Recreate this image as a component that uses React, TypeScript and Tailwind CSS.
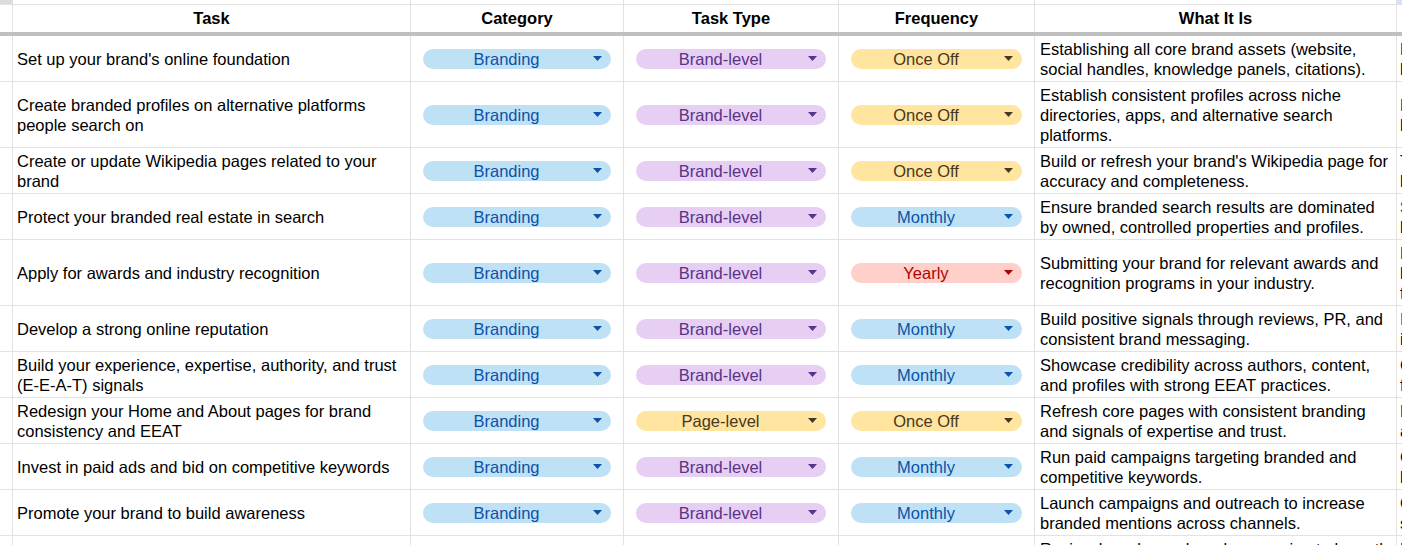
import React from "react";

type Tone = "blue" | "purple" | "yellow" | "red";

const tones: Record<Tone, string> = {
  blue: "bg-[#bfe1f6] text-[#0a53a8]",
  purple: "bg-[#e6cff2] text-[#5a3286]",
  yellow: "bg-[#ffe5a0] text-[#473821]",
  red: "bg-[#ffcfc9] text-[#b10202]",
};

const freqTone: Record<string, Tone> = {
  "Once Off": "yellow",
  Monthly: "blue",
  Yearly: "red",
};

type Row = {
  task: string[];
  type: string;
  freq: string;
  what: string[];
  next: string[];
  tall?: boolean;
};

const rows: Row[] = [
  {
    task: ["Set up your brand's online foundation"],
    type: "Brand-level",
    freq: "Once Off",
    what: ["Establishing all core brand assets (website,", "social handles, knowledge panels, citations)."],
    next: ["Ensures", "brand"],
  },
  {
    task: ["Create branded profiles on alternative platforms", "people search on"],
    type: "Brand-level",
    freq: "Once Off",
    what: ["Establish consistent profiles across niche", "directories, apps, and alternative search", "platforms."],
    next: ["Expands", "brand"],
    tall: true,
  },
  {
    task: ["Create or update Wikipedia pages related to your", "brand"],
    type: "Brand-level",
    freq: "Once Off",
    what: ["Build or refresh your brand's Wikipedia page for", "accuracy and completeness."],
    next: ["Trusted", "knowledge"],
  },
  {
    task: ["Protect your branded real estate in search"],
    type: "Brand-level",
    freq: "Monthly",
    what: ["Ensure branded search results are dominated", "by owned, controlled properties and profiles."],
    next: ["Stops", "brand"],
  },
  {
    task: ["Apply for awards and industry recognition"],
    type: "Brand-level",
    freq: "Yearly",
    what: ["Submitting your brand for relevant awards and", "recognition programs in your industry."],
    next: ["Builds", "brand", "for"],
    tall: true,
  },
  {
    task: ["Develop a strong online reputation"],
    type: "Brand-level",
    freq: "Monthly",
    what: ["Build positive signals through reviews, PR, and", "consistent brand messaging."],
    next: ["Influences", "in"],
  },
  {
    task: ["Build your experience, expertise, authority, and trust", "(E-E-A-T) signals"],
    type: "Brand-level",
    freq: "Monthly",
    what: ["Showcase credibility across authors, content,", "and profiles with strong EEAT practices."],
    next: ["Core", "for"],
  },
  {
    task: ["Redesign your Home and About pages for brand", "consistency and EEAT"],
    type: "Page-level",
    freq: "Once Off",
    what: ["Refresh core pages with consistent branding", "and signals of expertise and trust."],
    next: ["Key", "and"],
  },
  {
    task: ["Invest in paid ads and bid on competitive keywords"],
    type: "Brand-level",
    freq: "Monthly",
    what: ["Run paid campaigns targeting branded and", "competitive keywords."],
    next: ["Captures", "brand"],
  },
  {
    task: ["Promote your brand to build awareness"],
    type: "Brand-level",
    freq: "Monthly",
    what: ["Launch campaigns and outreach to increase", "branded mentions across channels."],
    next: ["Grows", "search"],
  },
  {
    task: ["Review brand consistency across channels"],
    type: "Brand-level",
    freq: "Monthly",
    what: ["Review brand search and messaging to keep them", "consistent across every channel."],
    next: ["Keeps", "brand"],
  },
];

const cols = "grid grid-cols-[13px_398px_213px_215px_196px_362px_1fr]";
const cell = "border-r border-b border-[#e2e2e2]";

function Chip({ label, tone }: { label: string; tone: Tone }) {
  return (
    <div className={`mx-[12px] flex h-[20px] flex-1 items-center rounded-full ${tones[tone]}`}>
      <span className="flex-1 text-center leading-[20px]">{label}</span>
      <svg width="9" height="5" viewBox="0 0 9 5" className="mr-[9px] ml-[3px]">
        <path d="M0 0h9L4.5 5z" fill="currentColor" />
      </svg>
    </div>
  );
}

function Lines({ lines }: { lines: string[] }) {
  return (
    <div className="flex flex-col">
      {lines.map((l, i) => (
        <div key={i} className="whitespace-nowrap">
          {l}
        </div>
      ))}
    </div>
  );
}

export default function App() {
  return (
    <div
      className="h-[545px] w-[1402px] overflow-hidden bg-white text-[16.5px] leading-[20px] text-black"
      style={{ fontFamily: '"Liberation Sans", Arial, sans-serif' }}
    >
      {/* tail of the sheet's column header bar */}
      <div className={`${cols} h-[5px]`}>
        <div className={`${cell} bg-[#dadce0]`} />
        <div className={cell} />
        <div className={cell} />
        <div className={cell} />
        <div className={cell} />
        <div className={cell} />
        <div className="border-b border-[#e2e2e2] bg-[#d3e3fd]" />
      </div>

      {/* header */}
      <div className={`${cols} h-[31px] border-b-[4px] border-[#c0c0c0] font-bold`}>
        <div className="border-r border-[#e2e2e2]" />
        {["Task", "Category", "Task Type", "Frequency", "What It Is"].map((h) => (
          <div key={h} className="flex items-center justify-center border-r border-[#e2e2e2] pb-[1px]">
            {h}
          </div>
        ))}
        <div />
      </div>

      {rows.map((r, i) => (
        <div key={i} className={`${cols} ${r.tall ? "h-[66px]" : "h-[46px]"}`}>
          <div className={cell} />
          <div className={`${cell} flex items-center overflow-hidden pl-[4px]`}>
            <Lines lines={r.task} />
          </div>
          <div className={`${cell} flex items-center`}>
            <Chip label="Branding" tone="blue" />
          </div>
          <div className={`${cell} flex items-center`}>
            <Chip label={r.type} tone={r.type === "Page-level" ? "yellow" : "purple"} />
          </div>
          <div className={`${cell} flex items-center`}>
            <Chip label={r.freq} tone={freqTone[r.freq]} />
          </div>
          <div className={`${cell} flex items-center overflow-hidden pl-[5px]`}>
            <Lines lines={r.what} />
          </div>
          <div className="flex items-center overflow-hidden border-b border-[#e2e2e2] pl-[3px]">
            <Lines lines={r.next} />
          </div>
        </div>
      ))}
    </div>
  );
}
